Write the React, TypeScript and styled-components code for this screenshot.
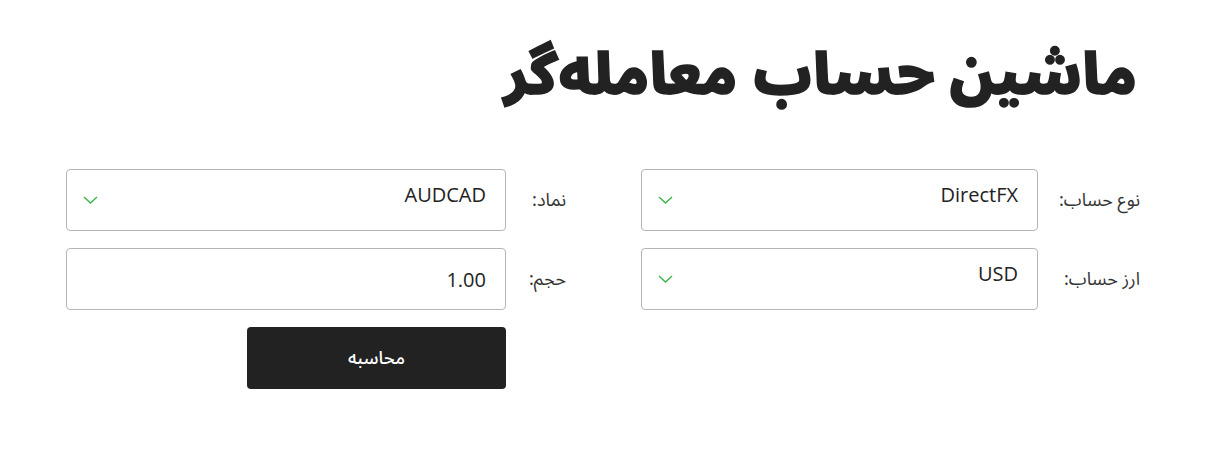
import React, { useState } from 'react';
import styled, { createGlobalStyle } from 'styled-components';

const GlobalStyle = createGlobalStyle`
  html, body {
    margin: 0;
    padding: 0;
    background: #ffffff;
  }
  body {
    font-family: 'Open Sans', 'Noto Sans Arabic', 'Noto Sans', 'DejaVu Sans', sans-serif;
    color: #222;
  }
`;

const Page = styled.div`
  direction: rtl;
  width: 1074px;
  margin-left: 66px;
  padding-top: 33px;
`;

const Title = styled.h1`
  margin: 0 3px 0 0;
  font-family: 'Noto Sans Arabic', 'DejaVu Sans', sans-serif;
  font-size: 57px;
  font-weight: 900;
  line-height: 87px;
  color: #222;
  -webkit-text-stroke: 1.5px #222;
`;

const Form = styled.div`
  display: grid;
  grid-template-columns: 499px 500px;
  column-gap: 75px;
  align-items: start;
  margin-top: 49px;
`;

const Column = styled.div<{ $gap: number }>`
  display: grid;
  grid-template-columns: auto 1fr;
  column-gap: ${p => p.$gap}px;
  row-gap: 17px;
  align-items: center;
  align-content: start;
`;

const Label = styled.label`
  font-family: 'Noto Sans Arabic', 'Open Sans', 'DejaVu Sans', sans-serif;
  font-size: 18px;
  color: #333;
  white-space: nowrap;
`;

const Field = styled.div<{ $kind: 'select' | 'input' }>`
  position: relative;
  box-sizing: border-box;
  height: 62px;
  border: 1px solid #b5b5b5;
  border-radius: 4px;
  background: #fff;
  display: flex;
  align-items: center;
  padding: ${p => (p.$kind === 'select' ? '0 19px 12px 19px' : '0 19px')};
  font-family: 'Open Sans', 'Noto Sans', sans-serif;
  font-size: 20px;
  color: #222;
  cursor: pointer;
`;

const Value = styled.span`
  flex: 1;
  text-align: right;
  direction: ltr;
`;

const Chevron = styled.svg`
  position: absolute;
  left: 16px;
  top: 50%;
  margin-top: -4px;
`;

const Actions = styled.div`
  grid-column: 2;
  display: flex;
  justify-content: flex-end;
  direction: ltr;
`;

const Button = styled.button`
  width: 259px;
  height: 62px;
  border: none;
  border-radius: 4px;
  background: #222;
  color: #fff;
  font-family: 'Noto Sans Arabic', 'Open Sans', 'DejaVu Sans', sans-serif;
  font-size: 18px;
  font-weight: 500;
  cursor: pointer;
`;

const ArrowDown = () => (
  <Chevron width="15" height="8" viewBox="0 0 15 8" fill="none">
    <path d="M1 1L7.5 7L14 1" stroke="#3bb44a" strokeWidth="1.4" />
  </Chevron>
);

const SelectField: React.FC<{ value: string }> = ({ value }) => (
  <Field $kind="select">
    <Value>{value}</Value>
    <ArrowDown />
  </Field>
);

const App: React.FC = () => {
  const [volume] = useState('1.00');

  return (
    <>
      <GlobalStyle />
      <Page>
        <Title>ماشین حساب معامله‌گر</Title>
        <Form>
          <Column $gap={21}>
            <Label>نوع حساب:</Label>
            <SelectField value="DirectFX" />
            <Label>ارز حساب:</Label>
            <SelectField value="USD" />
          </Column>
          <Column $gap={23}>
            <Label>نماد:</Label>
            <SelectField value="AUDCAD" />
            <Label>حجم:</Label>
            <Field $kind="input">
              <Value>{volume}</Value>
            </Field>
            <Actions>
              <Button>محاسبه</Button>
            </Actions>
          </Column>
        </Form>
      </Page>
    </>
  );
};

export default App;
